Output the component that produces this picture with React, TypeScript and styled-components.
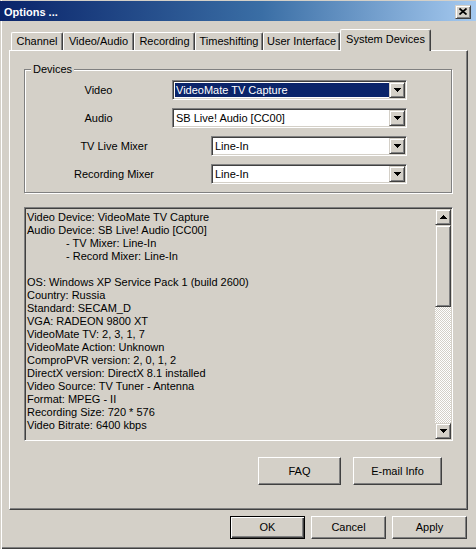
import React from 'react';
import styled, { createGlobalStyle, css } from 'styled-components';

const Global = createGlobalStyle`
  html, body { margin: 0; padding: 0; background: #d4d0c8; }
  body { font-family: "Liberation Sans", Arial, sans-serif; font-size: 11px; color: #000; }
  * { box-sizing: border-box; }
`;

const raised = css`
  border: 1px solid;
  border-color: #d4d0c8 #404040 #404040 #d4d0c8;
  box-shadow: inset 1px 1px #fff, inset -1px -1px #808080;
  background: #d4d0c8;
`;

const Window = styled.div`
  width: 476px;
  height: 549px;
  background: #d4d0c8;
  display: flex;
  flex-direction: column;
  overflow: hidden;
  box-shadow: inset 1px 0 #d4d0c8, inset 2px 0 #fff, inset 0 -1px #404040, inset 0 -2px #808080;
`;

const TitleBar = styled.div`
  margin-top: 1px;
  height: 20px;
  flex: none;
  display: flex;
  align-items: center;
  justify-content: space-between;
  padding: 2px 5px 0 4px;
  background: linear-gradient(to right, #0a246a 0%, #3a6ea5 55%, #a6caf0 100%);
`;

const Title = styled.span`
  color: #fff;
  font-weight: bold;
  font-size: 11px;
  line-height: 13px;
`;

const CloseButton = styled.div`
  ${raised};
  width: 16px;
  height: 14px;
  display: flex;
  align-items: center;
  justify-content: center;
  padding-bottom: 1px;
`;

const Content = styled.div`
  flex: 1;
  display: flex;
  flex-direction: column;
  padding: 8px 8px 0 9px;
`;

const TabRow = styled.div`
  display: flex;
  align-items: flex-end;
  padding-left: 2px;
  height: 21px;
`;

const Tab = styled.div<{ $w: number; $active?: boolean }>`
  width: ${p => p.$w}px;
  height: ${p => (p.$active ? 22 : 18)}px;
  margin-bottom: ${p => (p.$active ? -1 : 0)}px;
  position: relative;
  z-index: ${p => (p.$active ? 2 : 1)};
  background: #d4d0c8;
  border-top: 1px solid #fff;
  border-left: 1px solid #fff;
  border-right: 1px solid #404040;
  border-radius: 2px 2px 0 0;
  box-shadow: inset -1px 0 #808080;
  display: flex;
  align-items: center;
  justify-content: center;
  padding-bottom: ${p => (p.$active ? 2 : 0)}px;
  white-space: nowrap;
  line-height: 13px;
`;

const Panel = styled.div`
  width: 459px;
  height: 460px;
  flex: none;
  border-top: 1px solid #fff;
  border-left: 1px solid #fff;
  border-right: 1px solid #404040;
  border-bottom: 1px solid #404040;
  box-shadow: inset -1px -1px #808080;
  padding: 18px 0 0 14px;
  display: flex;
  flex-direction: column;
`;

const GroupBox = styled.div`
  position: relative;
  width: 428px;
  height: 124px;
  border: 1px solid #808080;
  box-shadow: inset 1px 1px #fff, 1px 1px #fff;
  padding-top: 10px;
  display: flex;
  flex-direction: column;
  gap: 8px;
`;

const Legend = styled.span`
  position: absolute;
  top: -7px;
  left: 6px;
  padding: 0 2px;
  background: #d4d0c8;
  line-height: 13px;
`;

const Row = styled.div`
  display: flex;
  align-items: center;
  height: 20px;
`;

const Label = styled.div<{ $w: number; $gap: number }>`
  width: ${p => p.$w}px;
  margin-right: ${p => p.$gap}px;
  text-align: center;
  line-height: 13px;
  white-space: nowrap;
`;

const Combo = styled.div<{ $w: number }>`
  width: ${p => p.$w}px;
  height: 20px;
  background: #fff;
  border: 1px solid;
  border-color: #808080 #fff #fff #808080;
  box-shadow: inset 1px 1px #404040, inset -1px -1px #d4d0c8;
  padding: 1px;
  display: flex;
`;

const ComboValue = styled.div<{ $selected?: boolean }>`
  flex: 1;
  margin: 1px 0 1px 1px;
  padding-left: 1px;
  display: flex;
  align-items: center;
  line-height: 13px;
  white-space: nowrap;
  overflow: hidden;
  background: ${p => (p.$selected ? '#0a246a' : 'transparent')};
  color: ${p => (p.$selected ? '#fff' : '#000')};
`;

const ArrowButton = styled.div<{ $h?: number }>`
  ${raised};
  width: 16px;
  height: ${p => p.$h ?? 16}px;
  flex: none;
  display: flex;
  align-items: center;
  justify-content: center;
`;

const TextBox = styled.div`
  margin-top: 14px;
  width: 429px;
  height: 234px;
  flex: none;
  background: #d4d0c8;
  border: 1px solid;
  border-color: #808080 #fff #fff #808080;
  box-shadow: inset 1px 1px #404040, inset -1px -1px #d4d0c8;
  padding: 1px;
  display: flex;
`;

const TextLines = styled.div`
  flex: 1;
  padding: 2px 0 0 1px;
  overflow: hidden;
`;

const Line = styled.div<{ $indent?: boolean }>`
  height: 13px;
  line-height: 13px;
  white-space: pre;
  padding-left: ${p => (p.$indent ? 39 : 0)}px;
`;

const ScrollBar = styled.div`
  width: 16px;
  flex: none;
  display: flex;
  flex-direction: column;
`;

const Thumb = styled.div`
  ${raised};
  height: 82px;
  flex: none;
`;

const Track = styled.div`
  flex: 1;
  background-color: #d4d0c8;
  background-image: repeating-conic-gradient(#fff 0 25%, #d4d0c8 0 50%);
  background-size: 2px 2px;
`;

const PanelButtons = styled.div`
  width: 429px;
  margin-top: 16px;
  padding-right: 11px;
  display: flex;
  justify-content: flex-end;
  gap: 12px;
`;

const Button = styled.div<{ $w: number; $h: number; $default?: boolean }>`
  width: ${p => p.$w}px;
  height: ${p => p.$h}px;
  flex: none;
  display: flex;
  align-items: center;
  justify-content: center;
  line-height: 13px;
  background: #d4d0c8;
  ${p =>
    p.$default
      ? css`
          border: 1px solid #000;
          box-shadow: inset 1px 1px #fff, inset -1px -1px #404040, inset -2px -2px #808080;
        `
      : css`
          border: 1px solid;
          border-color: #fff #404040 #404040 #fff;
          box-shadow: inset -1px -1px #808080;
        `}
`;

const DialogButtons = styled.div`
  margin-top: 6px;
  padding-right: 1px;
  display: flex;
  justify-content: flex-end;
  gap: 6px;
`;

const Down = () => (
  <svg width="7" height="4" viewBox="0 0 7 4" shapeRendering="crispEdges">
    <polygon points="0,0 7,0 3.5,4" fill="#000" />
  </svg>
);

const Up = () => (
  <svg width="7" height="4" viewBox="0 0 7 4" shapeRendering="crispEdges">
    <polygon points="0,4 7,4 3.5,0" fill="#000" />
  </svg>
);

const CloseX = () => (
  <svg width="8" height="7" viewBox="0 0 8 7">
    <path d="M0.5 0.5 L7.5 6.5 M7.5 0.5 L0.5 6.5" stroke="#000" strokeWidth="1.7" />
  </svg>
);

const tabs: { label: string; w: number; active?: boolean }[] = [
  { label: 'Channel', w: 52 },
  { label: 'Video/Audio', w: 71 },
  { label: 'Recording', w: 61 },
  { label: 'Timeshifting', w: 68 },
  { label: 'User Interface', w: 77 },
  { label: 'System Devices', w: 91, active: true },
];

const devices: { label: string; value: string; lw: number; gap: number; cw: number; selected?: boolean }[] = [
  { label: 'Video', value: 'VideoMate TV Capture', lw: 147, gap: 0, cw: 235, selected: true },
  { label: 'Audio', value: 'SB Live! Audio [CC00]', lw: 147, gap: 0, cw: 235 },
  { label: 'TV Live Mixer', value: 'Line-In', lw: 178, gap: 8, cw: 196 },
  { label: 'Recording Mixer', value: 'Line-In', lw: 178, gap: 8, cw: 196 },
];

const info: { t: string; indent?: boolean }[] = [
  { t: 'Video Device: VideoMate TV Capture' },
  { t: 'Audio Device: SB Live! Audio [CC00]' },
  { t: '- TV Mixer: Line-In', indent: true },
  { t: '- Record Mixer: Line-In', indent: true },
  { t: '' },
  { t: 'OS: Windows XP Service Pack 1 (build 2600)' },
  { t: 'Country: Russia' },
  { t: 'Standard: SECAM_D' },
  { t: 'VGA: RADEON 9800 XT' },
  { t: 'VideoMate TV: 2, 3, 1, 7' },
  { t: 'VideoMate Action: Unknown' },
  { t: 'ComproPVR version: 2, 0, 1, 2' },
  { t: 'DirectX version: DirectX 8.1 installed' },
  { t: 'Video Source: TV Tuner - Antenna' },
  { t: 'Format: MPEG - II' },
  { t: 'Recording Size: 720 * 576' },
  { t: 'Video Bitrate: 6400 kbps' },
];

export default function App() {
  return (
    <>
      <Global />
      <Window>
        <TitleBar>
          <Title>Options ...</Title>
          <CloseButton>
            <CloseX />
          </CloseButton>
        </TitleBar>
        <Content>
          <TabRow>
            {tabs.map(t => (
              <Tab key={t.label} $w={t.w} $active={t.active}>
                {t.label}
              </Tab>
            ))}
          </TabRow>
          <Panel>
            <GroupBox>
              <Legend>Devices</Legend>
              {devices.map(d => (
                <Row key={d.label}>
                  <Label $w={d.lw} $gap={d.gap}>
                    {d.label}
                  </Label>
                  <Combo $w={d.cw}>
                    <ComboValue $selected={d.selected}>{d.value}</ComboValue>
                    <ArrowButton>
                      <Down />
                    </ArrowButton>
                  </Combo>
                </Row>
              ))}
            </GroupBox>
            <TextBox>
              <TextLines>
                {info.map((l, i) => (
                  <Line key={i} $indent={l.indent}>
                    {l.t}
                  </Line>
                ))}
              </TextLines>
              <ScrollBar>
                <ArrowButton>
                  <Up />
                </ArrowButton>
                <Thumb />
                <Track />
                <ArrowButton>
                  <Down />
                </ArrowButton>
              </ScrollBar>
            </TextBox>
            <PanelButtons>
              <Button $w={83} $h={28}>FAQ</Button>
              <Button $w={89} $h={28}>E-mail Info</Button>
            </PanelButtons>
          </Panel>
          <DialogButtons>
            <Button $w={75} $h={23} $default>OK</Button>
            <Button $w={75} $h={23}>Cancel</Button>
            <Button $w={75} $h={23}>Apply</Button>
          </DialogButtons>
        </Content>
      </Window>
    </>
  );
}
